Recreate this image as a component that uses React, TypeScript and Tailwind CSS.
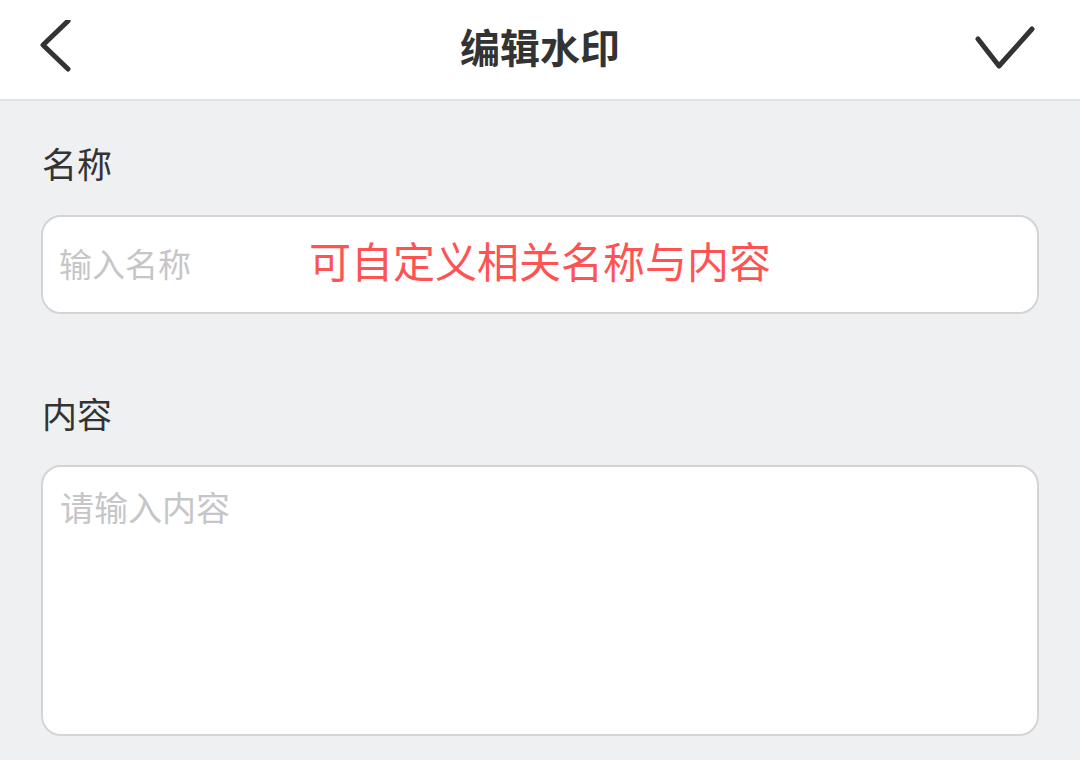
import React from "react";

const font = { fontFamily: '"Noto Sans CJK SC", "Noto Sans", sans-serif' };

export default function App() {
  return (
    <main className="w-[1080px] h-[760px] bg-[#eff0f2] overflow-hidden" style={font}>
      <header className="h-[101px] bg-white border-b-2 border-[#e2e2e4] flex items-center px-[38px]">
        <div className="w-[130px] flex items-center">
          <button className="w-[40px] h-[60px] flex items-center">
            <svg width="40" height="60" viewBox="38 20 40 60" fill="none" stroke="#333" strokeWidth="5" strokeLinecap="round" strokeLinejoin="round">
              <polyline points="68,21 43,45 68,69" />
            </svg>
          </button>
        </div>
        <h1 className="flex-1 text-center text-[40px] leading-none font-bold text-[#333] mb-[8px]">编辑水印</h1>
        <div className="w-[130px] flex items-center justify-end pr-[4px]">
          <button className="w-[64px] h-[60px] flex items-center">
            <svg width="64" height="60" viewBox="974 20 64 60" fill="none" stroke="#333" strokeWidth="5" strokeLinecap="round" strokeLinejoin="round">
              <polyline points="978,39 999,66 1032,29" />
            </svg>
          </button>
        </div>
      </header>

      <section className="px-[41px]">
        <div className="mt-[44px] h-[36px] leading-[36px] text-[35px] text-[#333] pl-[1px]">名称</div>
        <div className="mt-[34px] h-[99px] bg-white rounded-[20px] border-2 border-[#d4d4d6] flex items-center pl-[16px]">
          <span className="text-[33px] text-[#c6c6c8] w-[250px] pb-[2px]">输入名称</span>
          <span className="text-[42px] text-[#ff5252] leading-none pb-[10px]">可自定义相关名称与内容</span>
        </div>

        <div className="mt-[81px] h-[36px] leading-[36px] text-[35px] text-[#333] pl-[1px]">内容</div>
        <div className="mt-[34px] h-[271px] bg-white rounded-[20px] border-2 border-[#d4d4d6] pl-[17px] pt-[16px]">
          <span className="text-[34px] leading-[48px] text-[#c6c6c8]">请输入内容</span>
        </div>
      </section>
    </main>
  );
}
